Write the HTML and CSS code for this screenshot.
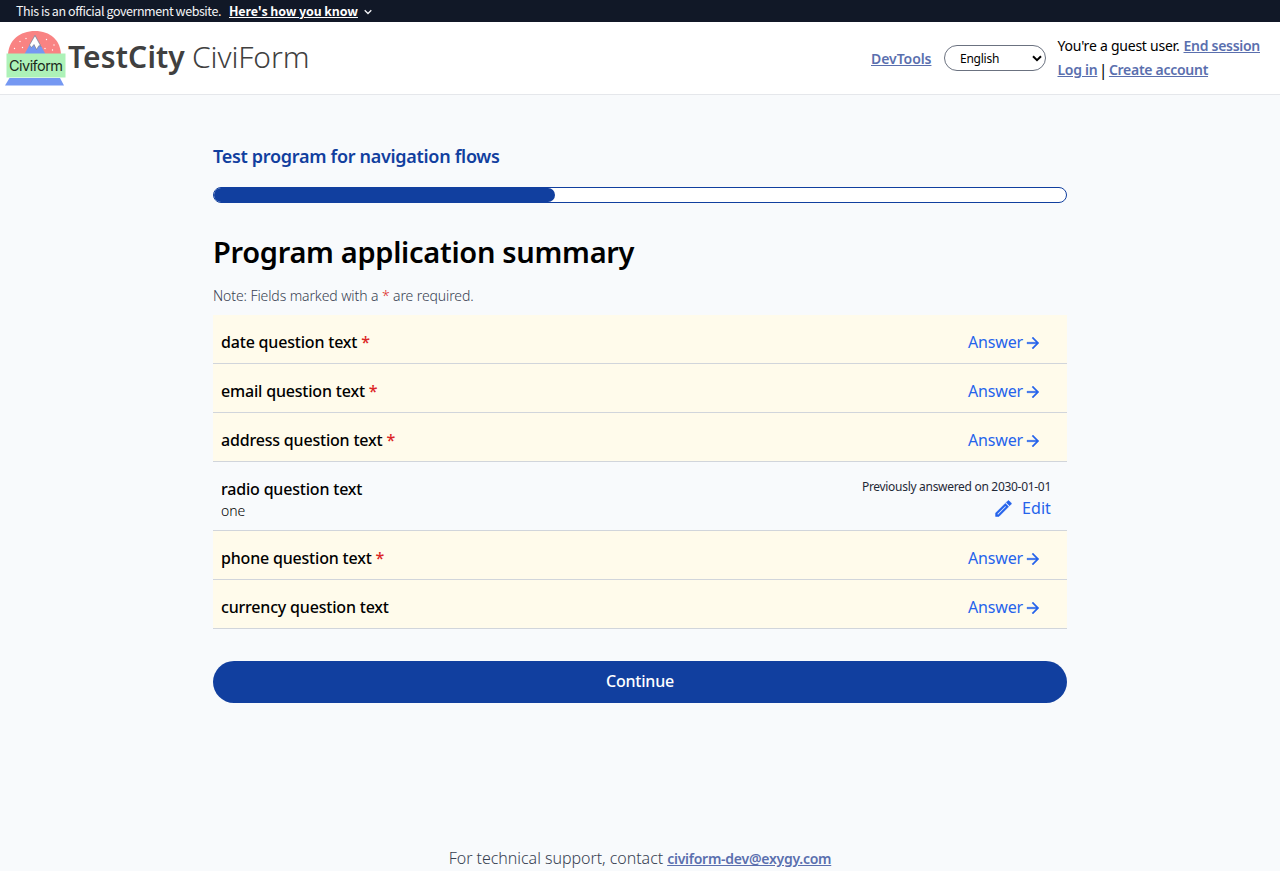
FILE: index.html
```
<!DOCTYPE html>
<html lang="en">
<head>
<meta charset="utf-8">
<title>Program application summary</title>
<link rel="stylesheet" href="styles.css">
</head>
<body>
<svg width="0" height="0" class="defs" aria-hidden="true">
  <symbol id="arrow" viewBox="0 0 24 24"><path d="M12 4l-1.41 1.41L16.17 11H4v2h12.17l-5.58 5.59L12 20l8-8z"/></symbol>
</svg>
<div class="banner">
  <span class="banner-text">This is an official government website.</span>
  <a class="banner-link">Here's how you know</a>
  <svg class="chevron" viewBox="0 0 8 6"><path d="M0.7 1.2L4 4.5L7.3 1.2"/></svg>
</div>
<header class="header">
  <div class="brand">
    <svg class="logo" viewBox="0 0 64 60">
      <path fill="#f98383" d="M4 27C4 11 16 2 31 2S57 11 57 27z"/>
      <path fill="#7598f2" d="M31 6L42 26H20z"/>
      <path fill="#fff" stroke="#777" stroke-width=".6" d="M31 6.5L37 17.500L35 16.5L32.500 20.500L30 15.500L27.500 18.500L25.500 16z"/>
      <g fill="#fff"><circle cx="22" cy="9.500" r=".7"/><circle cx="16" cy="12.500" r=".7"/><circle cx="10.500" cy="19.500" r=".7"/><circle cx="18.500" cy="18.500" r=".7"/><circle cx="42.500" cy="10.500" r=".7"/><circle cx="50" cy="16" r=".7"/><circle cx="41" cy="19.500" r=".7"/><circle cx="48.500" cy="21" r=".7"/></g>
      <path fill="#adf2b8" d="M2.500 24.500H61.500V48.500H2.500z"/>
      <path fill="#7598f2" d="M5.500 49H56L60 56.500H1z"/>
      <text x="5" y="42" class="logo-text" textLength="54">Civiform</text>
    </svg>
    <div class="brand-name"><b class="city">TestCity</b> <span class="civi">CiviForm</span></div>
  </div>
  <nav class="nav">
    <a class="link devtools">DevTools</a>
    <div class="select"><span>English</span><svg viewBox="0 0 10 7"><path d="M1 1.300L5 5.200L9 1.300"/></svg></div>
    <div class="account">
      <div><span class="guest">You're a guest user.</span><a class="link">End session</a></div>
      <div><a class="link">Log in</a><span class="bar">|</span><a class="link">Create account</a></div>
    </div>
  </nav>
</header>
<main class="main">
  <h2 class="program">Test program for navigation flows</h2>
  <div class="progress"><div class="progress-fill"></div></div>
  <h1 class="title">Program application summary</h1>
  <p class="note">Note: Fields marked with a <span class="req">*</span> are required.</p>
  <div class="rows">
    <div class="row todo"><div class="question">date question text <span class="req">*</span></div><a class="answer">Answer<svg><use href="#arrow"/></svg></a></div>
    <div class="row todo"><div class="question">email question text <span class="req">*</span></div><a class="answer">Answer<svg><use href="#arrow"/></svg></a></div>
    <div class="row todo"><div class="question">address question text <span class="req">*</span></div><a class="answer">Answer<svg><use href="#arrow"/></svg></a></div>
    <div class="row done">
      <div><div class="question">radio question text</div><div class="value">one</div></div>
      <div class="side"><div class="previous">Previously answered on 2030-01-01</div>
        <a class="edit"><svg viewBox="0 0 24 24"><path d="M14.060 9.020l.92.92L5.920 19H5v-.92l9.060-9.060M17.660 3c-.25 0-.51.1-.7.290l-1.830 1.830 3.750 3.750 1.830-1.830c.39-.39.39-1.020 0-1.410l-2.340-2.340c-.2-.2-.45-.29-.71-.29zm-3.600 3.190L3 17.250V21h3.750L17.810 9.940l-3.750-3.750z"/></svg>Edit</a></div>
    </div>
    <div class="row todo"><div class="question">phone question text <span class="req">*</span></div><a class="answer">Answer<svg><use href="#arrow"/></svg></a></div>
    <div class="row todo"><div class="question">currency question text</div><a class="answer">Answer<svg><use href="#arrow"/></svg></a></div>
  </div>
  <button class="continue">Continue</button>
</main>
<footer class="footer"><span>For technical support, contact</span><a class="link mail">civiform-dev@exygy.com</a></footer>
</body>
</html>
```
FILE: styles.css
```
* { box-sizing: border-box; margin: 0; padding: 0; }
body {
  height: 871px;
  display: flex;
  flex-direction: column;
  overflow: hidden;
  background: #f8fafc;
  color: #000;
  font-family: "Noto Sans", sans-serif;
}
.defs { position: absolute; }
.banner {
  display: flex;
  align-items: center;
  flex: none;
  height: 22px;
  padding: 0 16px;
  background: #111827;
  color: #f3f4f6;
  font: 12.5px/22px "Noto Sans CJK SC", sans-serif;
}
.banner-text { width: 213px; letter-spacing: -0.43px; white-space: nowrap; }
.banner-link { width: 129px; color: #fff; font-weight: 700; letter-spacing: -0.12px; text-decoration: underline; white-space: nowrap; }
.chevron { width: 8px; height: 6px; margin: 2px 0 0 6px; fill: none; stroke: #f3f4f6; stroke-width: 1.3; }
.header {
  display: flex;
  justify-content: space-between;
  flex: none;
  height: 73px;
  border-bottom: 1px solid #e5e7eb;
  background: #fff;
}
.brand { display: flex; padding: 6px 0 0 4px; }
.logo { width: 64px; height: 60px; margin-top: 1px; }
.logo-text { font: 14.5px Inter, sans-serif; fill: #1c2a20; }
.brand-name { display: flex; gap: 7px; font-size: 30px; line-height: 58px; color: #404040; }
.city { font-weight: 600; letter-spacing: 0.15px; }
.civi { font-weight: 300; letter-spacing: -0.1px; }
.nav { display: flex; align-items: center; padding-right: 20px; font-size: 14px; }
.link { color: #5a6fae; font-weight: 600; letter-spacing: -0.28px; text-decoration: underline; }
.devtools { width: 73px; letter-spacing: -0.06px; }
.select {
  display: flex;
  align-items: center;
  justify-content: space-between;
  width: 102px;
  height: 26px;
  margin-right: 11.5px;
  padding: 0 3px 0 15px;
  border: 1px solid #6b7280;
  border-radius: 13px;
  font-size: 12px;
  letter-spacing: -0.25px;
}
.select svg { width: 10px; height: 7px; fill: none; stroke: #000; stroke-width: 2; }
.account { width: 202.5px; line-height: 24px; white-space: nowrap; }
.account > div { display: flex; }
.guest { width: 126px; letter-spacing: -0.24px; }
.bar { width: 11.5px; text-align: center; font-size: 16px; }
.main { flex: none; width: 854px; margin: 0 auto; padding-top: 47px; }
.program { font-size: 18px; font-weight: 600; line-height: 28px; letter-spacing: -0.3px; color: #113f9f; }
.progress { height: 16px; margin-top: 17px; border: 1px solid #113f9f; border-radius: 8px; background: #fff; }
.progress-fill { width: 341px; height: 14px; border-radius: 7px; background: #113f9f; }
.title { margin-top: 31px; font-size: 29px; font-weight: 600; line-height: 36px; letter-spacing: -0.3px; }
.note { margin-top: 16px; font-size: 14px; font-weight: 300; line-height: 20px; letter-spacing: -0.1px; color: #374151; }
.req { color: #dc2626; }
.rows { margin-top: 9px; }
.row { display: flex; justify-content: space-between; border-bottom: 1px solid #d1d5db; padding-left: 8px; }
.todo { height: 49px; padding-top: 15px; background: #fffbeb; }
.done { height: 69px; padding-top: 15px; }
.question { font-size: 16px; font-weight: 500; line-height: 24px; letter-spacing: -0.19px; }
.value { font-size: 14px; font-weight: 300; line-height: 20px; }
.answer { display: flex; align-items: center; height: 24px; padding-right: 25px; color: #2563eb; font-size: 16px; letter-spacing: -0.17px; }
.answer svg { width: 18px; height: 18px; margin: 1px 0 0 1px; fill: currentColor; stroke: currentColor; stroke-width: 0.5; }
.side { padding: 2px 16px 0 0; text-align: right; }
.previous { font-size: 12px; line-height: 16px; letter-spacing: -0.3px; color: #1f2937; }
.edit { display: flex; align-items: center; justify-content: flex-end; gap: 8px; margin-top: 1px; height: 24px; color: #2563eb; font-size: 16px; letter-spacing: 0.1px; }
.edit svg { width: 21px; height: 21px; fill: currentColor; stroke: currentColor; stroke-width: 0.7; }
.continue {
  display: block;
  width: 100%;
  height: 42px;
  margin-top: 32px;
  padding-bottom: 2px;
  border: 0;
  border-radius: 21px;
  background: #113f9f;
  color: #fff;
  font: 500 16px "Noto Sans", sans-serif;
  letter-spacing: -0.2px;
}
.footer { display: flex; flex: none; gap: 4px; justify-content: center; margin-top: 143px; line-height: 24px; font-size: 16px; font-weight: 300; color: #374151; letter-spacing: -0.04px; }
.mail { font-size: 14px; letter-spacing: -0.25px; line-height: 26px; }
```
